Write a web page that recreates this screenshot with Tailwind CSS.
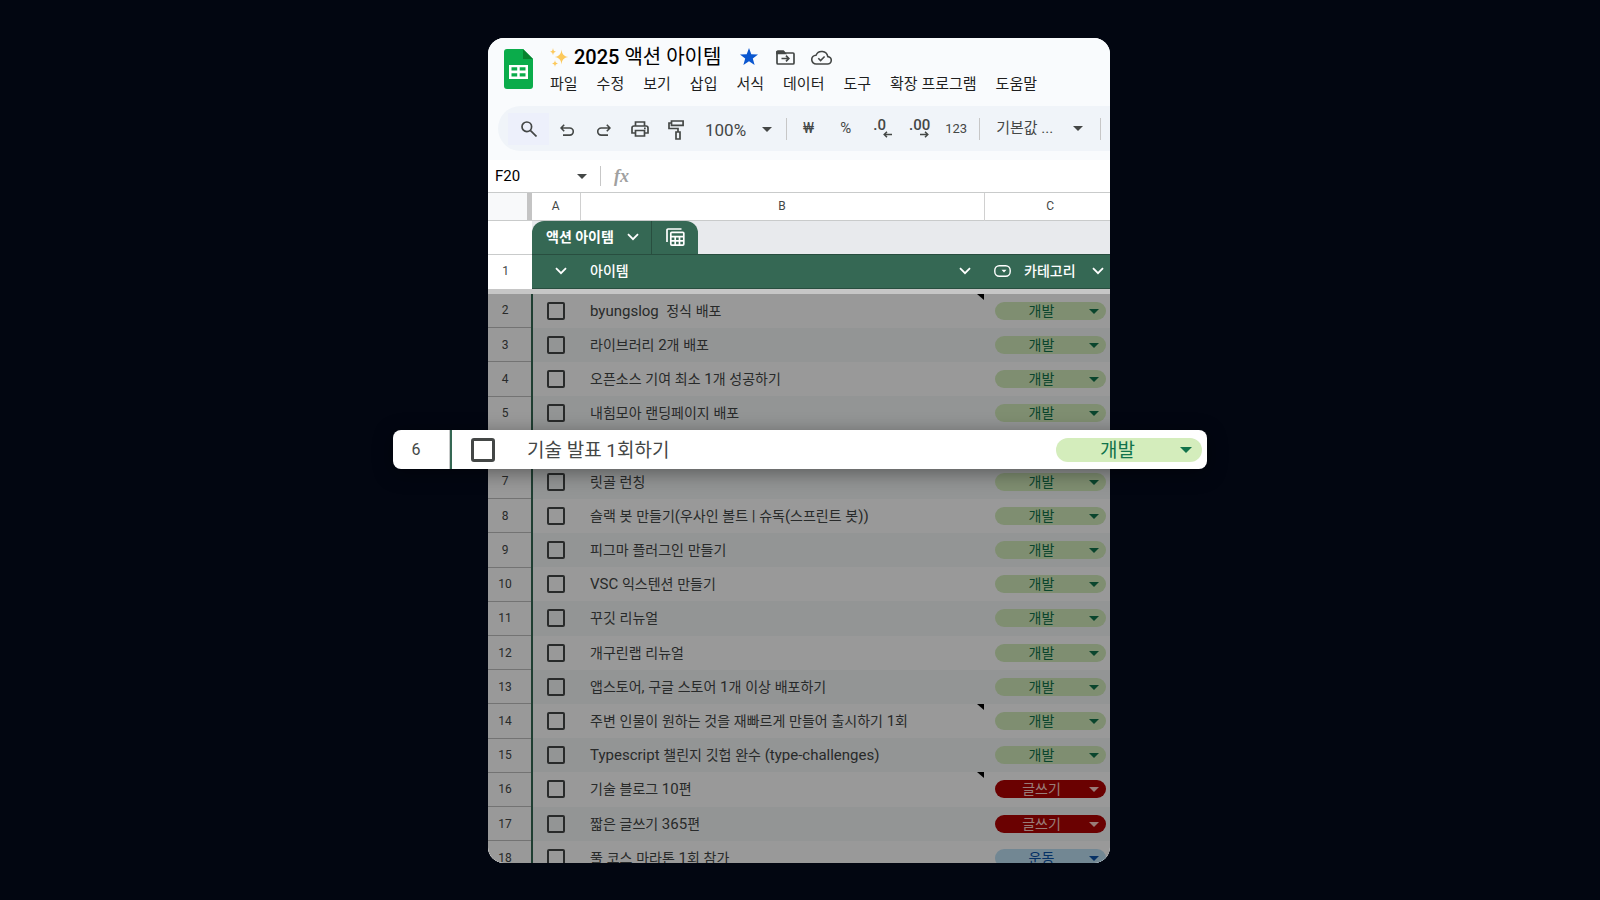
<!DOCTYPE html>
<html lang="ko">
<head>
  <meta charset="UTF-8">
  <meta name="viewport" content="width=device-width, initial-scale=1.0">
  <title>2025 액션 아이템</title>
  <script src="https://cdn.jsdelivr.net/npm/@tailwindcss/browser@4"></script>
</head>
<body class="bg-[#020611] font-['Roboto','Noto_Sans_CJK_KR',sans-serif] text-[#444746]">
  <!-- Shared icons -->
  <svg class="hidden">
    <symbol id="caret" viewBox="0 0 10 5"><path d="M0 0h10L5 5z" fill="currentColor"/></symbol>
    <symbol id="chevron" viewBox="0 0 12 8"><path d="M1 1.2l5 5 5-5" fill="none" stroke="currentColor" stroke-width="1.8"/></symbol>
  </svg>

  <main class="flex h-screen justify-center pt-[38px] pr-[2px] pb-[37px]">
    <div class="relative w-full max-w-[622px]">
      <div class="flex h-full flex-col overflow-hidden rounded-2xl bg-white">

        <!-- Title and menus -->
        <header class="bg-[#f9fbfd] pb-[9px]">
          <div class="flex h-[68px] pl-4">
            <svg class="mt-[11px] h-10 w-[29px] shrink-0" viewBox="0 0 29 40">
              <path d="M3 0h16l10 10v27a3 3 0 0 1-3 3H3a3 3 0 0 1-3-3V3a3 3 0 0 1 3-3z" fill="#0bac4b"/>
              <path d="M19 0l10 10H19z" fill="#07832f"/>
              <path d="M5 16h19v14H5zM7.500 18.300v3.300h5.700v-3.300zM15.700 18.300v3.300h5.800v-3.300zM7.500 24.200v3.400h5.700v-3.400zM15.700 24.200v3.400h5.800v-3.400z" fill="#fff" fill-rule="evenodd"/>
            </svg>
            <div class="pl-[17px] pt-[5px]">
              <div class="flex h-7 items-center">
                <svg class="mr-[5px] h-[19px] w-[19px]" viewBox="0 0 19 19" fill="#fcc95c">
                  <path d="M11.500 1.500c.6 5 2.200 6.700 7 7.500-4.800.8-6.400 2.500-7 7.500-.6-5-2.200-6.700-7-7.500 4.800-.8 6.400-2.500 7-7.500z"/>
                  <path d="M3 0c.3 2.500 1 3.300 3 3.700-2 .4-2.700 1.200-3 3.800C2.700 4.900 2 4.100 0 3.700 2 3.300 2.700 2.500 3 0zM5 12c.3 2.300 1 3 3 3.400-2 .4-2.700 1.200-3 3.600-.3-2.400-1-3.200-3-3.600 2-.4 2.700-1.100 3-3.400z"/>
                </svg>
                <h1 class="text-xl leading-7 text-black"><span class="font-medium">2025</span> 액션 아이템</h1>
                <button aria-label="별표" class="ml-[19px]">
                  <svg class="h-[18px] w-[18px]" viewBox="0 0 18 18"><path d="M9 0l2.300 6.200 6.700.3-5.200 4.100 1.800 6.400L9 13.300 3.400 17l1.800-6.400L0 6.500l6.700-.3z" fill="#0b57d0"/></svg>
                </button>
                <button aria-label="이동" class="ml-[18px]">
                  <svg class="h-[15px] w-[19px]" viewBox="0 0 19 15" fill="none" stroke="#444746" stroke-width="1.700">
                    <path d="M1 2.500V13a1 1 0 0 0 1 1h15a1 1 0 0 0 1-1V4a1 1 0 0 0-1-1H9L7.300 1.200H2a1 1 0 0 0-1 1.300z"/><path d="M1 2h6.500l1.500 1.500H1z" fill="#444746"/><path d="M5.500 8.500h7M10 5.700l2.800 2.800-2.800 2.800"/>
                  </svg>
                </button>
                <button aria-label="저장됨" class="ml-4">
                  <svg class="h-[15px] w-[21px]" viewBox="0 0 21 15" fill="none" stroke="#444746" stroke-width="1.600">
                    <path d="M5.300 14h11a3.700 3.700 0 0 0 .5-7.400A6.200 6.200 0 0 0 5 5.200 4.400 4.400 0 0 0 5.300 14z"/><path d="M7.300 8.200l2.300 2.300 4-4"/>
                  </svg>
                </button>
              </div>
              <nav class="flex gap-[19px] whitespace-nowrap text-[15px] leading-[26px] text-[#1f1f1f]">
                <button>파일</button>
                <button>수정</button>
                <button>보기</button>
                <button>삽입</button>
                <button>서식</button>
                <button>데이터</button>
                <button>도구</button>
                <button>확장 프로그램</button>
                <button>도움말</button>
              </nav>
            </div>
          </div>

          <!-- Toolbar -->
          <div class="ml-[10px] flex h-[45px] items-center overflow-hidden rounded-l-full bg-[#f0f4f9] pl-[10px] whitespace-nowrap">
            <button aria-label="검색" class="flex h-8 w-[41px] shrink-0 items-center justify-center bg-[#edf0fb]">
              <svg class="h-4 w-4" viewBox="0 0 16 16" fill="none" stroke="#444746" stroke-width="1.700"><circle cx="5.800" cy="5.800" r="4.800"/><path d="M9.300 9.300l6.200 6.200"/></svg>
            </button>
            <button aria-label="실행취소" class="flex w-9 shrink-0 justify-center">
              <svg class="mt-[3px] h-3 w-[14px]" viewBox="0 0 14 12" fill="none" stroke="#444746" stroke-width="1.600"><path d="M4.200.7L1 4l3.200 3.300M1 4h8.700a3.500 3.500 0 0 1 0 7.100H3"/></svg>
            </button>
            <button aria-label="재실행" class="flex w-[37px] shrink-0 justify-center">
              <svg class="mt-[3px] h-3 w-[14px]" viewBox="0 0 14 12" fill="none" stroke="#444746" stroke-width="1.600"><path d="M9.800.7L13 4 9.800 7.300M13 4H4.300a3.500 3.500 0 0 0 0 7.100H11"/></svg>
            </button>
            <button aria-label="인쇄" class="flex w-9 shrink-0 justify-center">
              <svg class="mt-px h-4 w-[18px]" viewBox="0 0 18 16" fill="none" stroke="#444746" stroke-width="1.700"><path d="M4.500 4.500V1h9v3.500M4.500 12H1V7a2 2 0 0 1 2-2h12a2 2 0 0 1 2 2v5h-3.500M4.500 9.500h9V15h-9z"/><path d="M13 7.300h1.700"/></svg>
            </button>
            <button aria-label="서식 복사" class="flex w-9 shrink-0 justify-center">
              <svg class="mt-[3px] h-5 w-4" viewBox="0 0 16 20" fill="none" stroke="#444746" stroke-width="1.700"><path d="M3.500 1h11.600v4.300H3.500zM3.500 3H1v5.500h9V12M8 12h4v7H8z"/></svg>
            </button>
            <button class="ml-[11px] flex items-center gap-[16px] pt-[2px] text-[17px] leading-5">100% <svg class="h-[5px] w-[10px]"><use href="#caret"/></svg></button>
            <span class="ml-[14px] h-[22px] w-px shrink-0 bg-[#c7c7c7]"></span>
            <button class="ml-[3px] w-[37px] shrink-0 text-[15px]">₩</button>
            <button class="w-[37px] shrink-0 text-[15px]">%</button>
            <button aria-label="소수점 이하 자릿수 감소" class="flex w-[37px] shrink-0 flex-col items-center text-[15px] font-medium leading-3">
              <span class="pr-[6px]">.0</span>
              <svg class="ml-[10px] h-[7px] w-[9px]" viewBox="0 0 9 7" fill="none" stroke="#444746" stroke-width="1.500"><path d="M9 3.500H1.500M4 .7L1.200 3.500 4 6.300"/></svg>
            </button>
            <button aria-label="소수점 이하 자릿수 증가" class="flex w-[37px] shrink-0 flex-col items-center text-[15px] font-medium leading-3">
              <span>.00</span>
              <svg class="ml-[9px] h-[7px] w-[9px]" viewBox="0 0 9 7" fill="none" stroke="#444746" stroke-width="1.500"><path d="M0 3.500h7.500M5 .7l2.800 2.800L5 6.300"/></svg>
            </button>
            <button class="w-9 shrink-0 text-[13px]">123</button>
            <span class="ml-[5px] h-[22px] w-px shrink-0 bg-[#c7c7c7]"></span>
            <button class="ml-4 flex items-center gap-[20px] text-[15px]">기본값 ... <svg class="h-[5px] w-[10px]"><use href="#caret"/></svg></button>
            <span class="ml-[17px] h-[22px] w-px shrink-0 bg-[#c7c7c7]"></span>
          </div>
        </header>

        <!-- Name box and formula bar -->
        <div class="flex h-[33px] shrink-0 items-center border-b border-[#c9cbcb]">
          <input aria-label="이름 상자" value="F20" class="w-[89px] pl-[7px] text-[15px] text-black">
          <svg class="h-[5px] w-[10px]"><use href="#caret"/></svg>
          <span class="ml-[13px] h-5 w-px bg-[#c7c7c7]"></span>
          <label for="formula" class="ml-[13px] font-['Liberation_Serif',serif] text-[18px] font-bold italic leading-5 text-[#a0a0a0]">fx</label>
          <input id="formula" class="min-w-0 flex-1 pl-2">
        </div>

        <!-- Frozen rows -->
        <table class="w-full table-fixed border-collapse text-left">
          <colgroup><col class="w-[44px]"><col class="w-[48px]"><col class="w-[404px]"><col></colgroup>
          <thead>
            <tr class="h-[27px] border-b border-[#c9cbcb] text-center text-[12px]">
              <td class="bg-[#f8f9fa] shadow-[inset_-5px_0_0_#c4c4c4]"></td>
              <th class="border-r border-[#d0d0d0] p-0 font-normal">A</th>
              <th class="border-r border-[#d0d0d0] p-0 font-normal">B</th>
              <th class="p-0 pl-[6px] font-normal">C</th>
            </tr>
            <tr class="h-[34px]">
              <td class="border-b border-[#c9cbcb] p-0"></td>
              <td colspan="3" class="bg-[#e8eaed] p-0 align-bottom">
                <div class="flex h-[33px] w-[166px] rounded-t-xl bg-[#356854] text-white">
                  <button class="flex w-[120px] items-center gap-[13px] border-r border-[#284e3f] pl-[14px] text-[14px] font-bold">액션 아이템 <svg class="h-2 w-3"><use href="#chevron"/></svg></button>
                  <button aria-label="표" class="flex flex-1 items-center justify-center">
                    <svg class="h-[18px] w-[19px]" viewBox="0 0 19 18" fill="none" stroke="#fff" stroke-width="1.700"><path d="M1 14V2a1 1 0 0 1 1-1h13.500"/><rect x="4.800" y="4.300" width="13" height="12.800" rx="1"/><path d="M5 8.700h13M5 12.900h13M9.200 8.700V17M13.500 8.700V17"/></svg>
                  </button>
                </div>
              </td>
            </tr>
            <tr class="h-[34px] text-[14px] text-white">
              <th class="bg-white p-0 pr-[9px] text-center text-[12px] font-normal text-[#444746]">1</th>
              <th class="border-y border-[#284e3f] bg-[#356854] p-0 pl-[11px]"><button aria-label="정렬" class="block"><svg class="mx-3 h-2 w-3"><use href="#chevron"/></svg></button></th>
              <th class="border-y border-[#284e3f] bg-[#356854] p-0 pl-[10px] pr-[13px] font-medium">
                <div class="flex items-center justify-between">아이템 <button aria-label="아이템 메뉴"><svg class="h-2 w-3"><use href="#chevron"/></svg></button></div>
              </th>
              <th class="border-y border-[#284e3f] bg-[#356854] p-0 pl-[10px] pr-[6px] font-medium">
                <div class="flex items-center">
                  <svg class="mr-[13px] h-3 w-[17px]" viewBox="0 0 17 12"><rect x=".8" y=".8" width="15.400" height="10.400" rx="4.500" fill="none" stroke="#fff" stroke-width="1.400"/><path d="M7.500 4.800h5L10 7.500z" fill="#fff"/></svg>
                  카테고리
                  <button aria-label="카테고리 메뉴" class="ml-auto"><svg class="h-2 w-3"><use href="#chevron"/></svg></button>
                </div>
              </th>
            </tr>
          </thead>
        </table>
        <div class="h-[5px] shrink-0 bg-[#c6c6c6]"></div>

        <!-- Item rows, dimmed behind the raised one -->
        <div class="relative min-h-0 flex-1 overflow-hidden">
          <table class="h-[582px] w-full table-fixed border-collapse text-left">
            <colgroup><col class="w-[44px]"><col class="w-[48px]"><col class="w-[404px]"><col></colgroup>
            <tbody id="rows"></tbody>
          </table>
          <div class="pointer-events-none absolute inset-0 bg-black/40"></div>
        </div>
      </div>

      <!-- Raised row -->
      <div class="absolute -left-[95px] -right-[97px] top-[392px] flex h-[39px] items-center rounded-lg bg-white pr-[5px] shadow-[0_4px_20px_rgba(0,0,0,0.4)]">
        <span class="w-[46px] text-center text-[16px]">6</span>
        <span class="ml-[10px] h-full w-[3px] border-l border-[#c9cbcb] bg-[#356854]"></span>
        <input type="checkbox" id="item6" class="ml-[19px] h-6 w-6 appearance-none rounded-[3px] border-[3px] border-[#444746]">
        <label for="item6" class="ml-8 pt-[2px] text-[19px] leading-6">기술 발표 1회하기</label>
        <span class="relative ml-auto block w-[146px] text-[#11734b]">
          <select aria-label="카테고리" class="block h-6 w-full appearance-none rounded-full bg-[#d4edbc] pt-px pr-[23px] text-center text-[19px] leading-6"><option>개발</option></select>
          <svg class="pointer-events-none absolute right-[10px] top-[9px] h-[6px] w-3"><use href="#caret"/></svg>
        </span>
      </div>
    </div>
  </main>

  <script>
    const colors = {
      '개발': 'bg-[#d4edbc] text-[#11734b]',
      '글쓰기': 'bg-[#b10202] text-[#ffcfc9]',
      '운동': 'bg-[#bfe1f6] text-[#0a53a8]',
    };

    // [title, category, has a note]
    const items = [
      ['byungslog&nbsp; 정식 배포', '개발', true],
      ['라이브러리 2개 배포', '개발'],
      ['오픈소스 기여 최소 1개 성공하기', '개발'],
      ['내힘모아 랜딩페이지 배포', '개발'],
      null, // row 6 is the raised one
      ['릿골 런칭', '개발'],
      ['슬랙 봇 만들기(우사인 볼트 | 슈독(스프린트 봇))', '개발'],
      ['피그마 플러그인 만들기', '개발'],
      ['VSC 익스텐션 만들기', '개발'],
      ['꾸깃 리뉴얼', '개발'],
      ['개구린랩 리뉴얼', '개발'],
      ['앱스토어, 구글 스토어 1개 이상 배포하기', '개발'],
      ['주변 인물이 원하는 것을 재빠르게 만들어 출시하기 1회', '개발', true],
      ['Typescript 챌린지 깃헙 완수 (type-challenges)', '개발'],
      ['기술 블로그 10편', '글쓰기', true],
      ['짧은 글쓰기 365편', '글쓰기'],
      ['풀 코스 마라톤 1회 참가', '운동'],
    ];

    // Hangul is set one step smaller than the Latin beside it
    const withHangul = text => text.replace(/[가-힣]+/g, m => `<span class="text-[14px]">${m}</span>`);

    document.getElementById('rows').innerHTML = items.map((item, i) => {
      const n = i + 2;
      if (!item) return '<tr class="h-[34px]"><td colspan="4" class="p-0"></td></tr>';
      const [title, category, note] = item;
      return `
        <tr class="h-[34px] ${n % 2 ? 'bg-[#f6f8f9]' : 'bg-white'}">
          <th class="border-b border-r-2 border-b-[#c0c0c0] border-r-[#356854] bg-white p-0 pr-[9px] text-center text-[12px] font-normal">${n}</th>
          <td class="p-0 pl-[14px]"><input type="checkbox" id="item${n}" class="block h-[18px] w-[18px] appearance-none rounded-[2px] border-2 border-[#444746]"></td>
          <td class="relative p-0 pl-[10px] text-[15px] leading-5">
            <label for="item${n}">${withHangul(title)}</label>
            ${note ? '<svg class="absolute right-0 top-0 h-[6px] w-[7px]" viewBox="0 0 7 6"><path d="M0 0h7v6z"/></svg>' : ''}
          </td>
          <td class="p-0 pl-[11px] pr-1">
            <span class="relative block ${colors[category]} rounded-full">
              <select aria-label="카테고리" class="block h-[18px] w-full appearance-none pr-[18px] text-center text-[14px] leading-[18px]"><option>${category}</option></select>
              <svg class="pointer-events-none absolute right-[7px] top-[7px] h-[5px] w-[10px]"><use href="#caret"/></svg>
            </span>
          </td>
        </tr>`;
    }).join('');
  </script>
</body>
</html>
